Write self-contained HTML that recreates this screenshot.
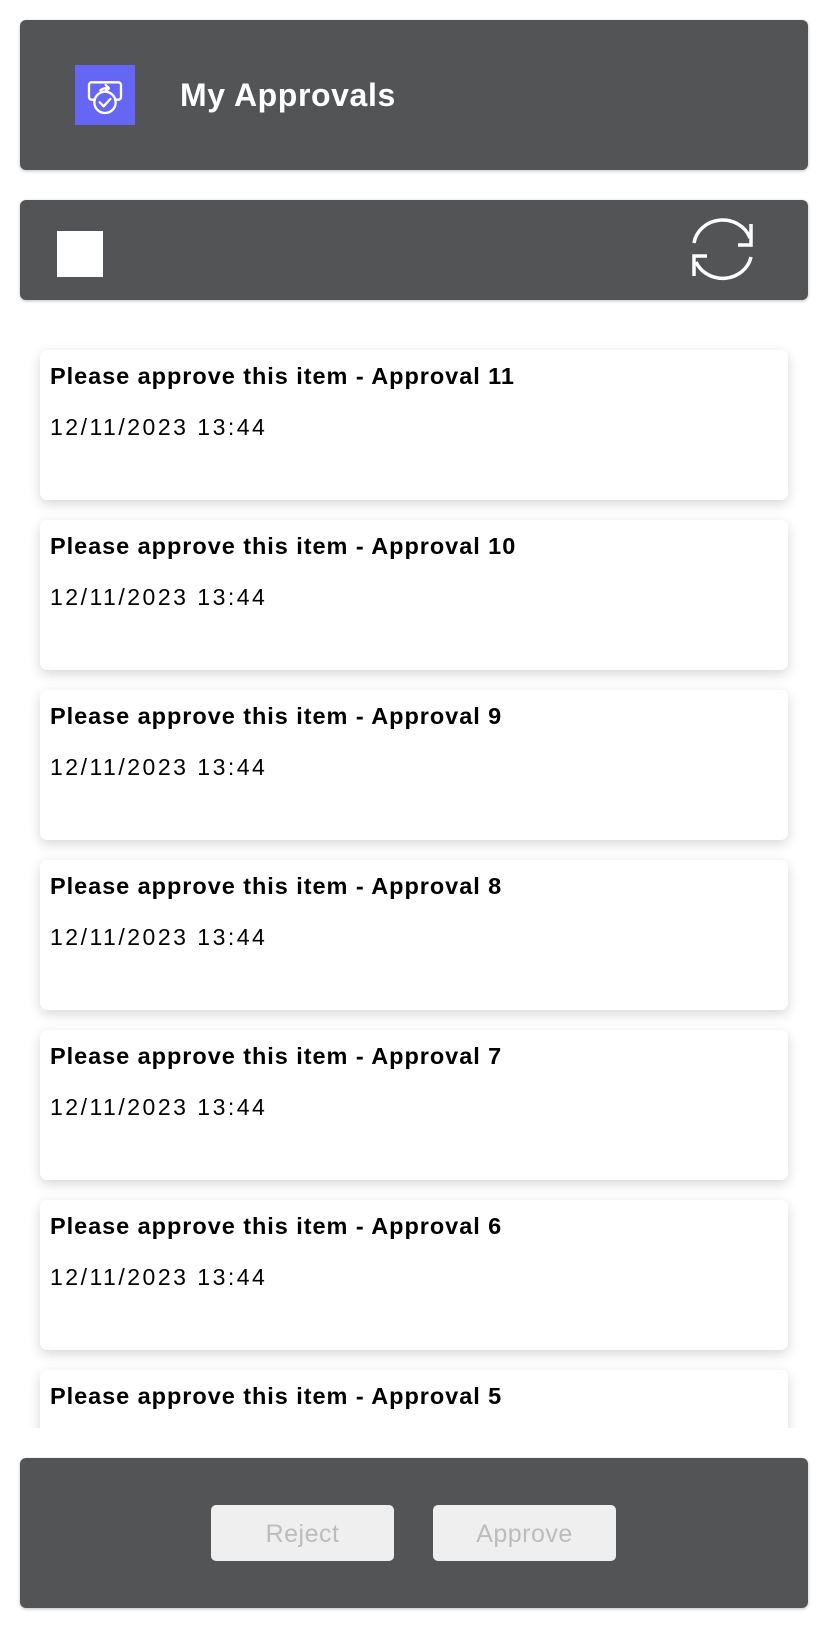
<!DOCTYPE html>
<html><head><meta charset="utf-8"><style>
*{margin:0;padding:0;box-sizing:border-box}
html,body{width:828px;height:1628px;background:#fff;font-family:"Liberation Sans",sans-serif;overflow:hidden}
.bar{position:absolute;left:20px;width:788px;background:#535456;border-radius:6px;box-shadow:0 1px 3px rgba(0,0,0,.25)}
.icon{position:absolute;left:75px;top:65px;width:60px;height:60px;background:#6567f4}
.title{position:absolute;left:180px;top:77px;color:#fff;font-weight:bold;font-size:32px;letter-spacing:0.6px}
.cb{position:absolute;left:57px;top:231px;width:46px;height:46px;background:#fff}
.list{position:absolute;left:0;top:320px;width:828px;height:1108px;overflow:hidden}
.card{position:absolute;left:40px;width:748px;height:150px;background:#fff;border-radius:7px;box-shadow:0 4px 12px rgba(0,0,0,.16)}
.card b{position:absolute;left:10px;top:13px;font-size:23.5px;color:#000;letter-spacing:0.95px}
.card span{position:absolute;left:10px;top:64px;font-size:23px;color:#000;letter-spacing:2.5px}
.btn{position:absolute;top:1505px;width:183px;height:56px;background:#efefef;border-radius:5px;color:#bcbcbc;font-size:25px;text-align:center;line-height:58px;letter-spacing:0.5px}
</style></head><body>
<div class="bar" style="top:20px;height:150px"></div>
<div class="icon"><svg width="60" height="60" viewBox="0 0 90 90"><g fill="none" stroke="#fff" stroke-width="3.5" stroke-linecap="round" stroke-linejoin="round"><path d="M30 52 H25 a4 4 0 0 1 -4 -4 V30 a4 4 0 0 1 4 -4 H65 a4 4 0 0 1 4 4 V48 a4 4 0 0 1 -4 4 H60"/><circle cx="45" cy="56" r="16"/><path d="M37 56 l6 6 l10 -11"/><path d="M38 38 a16 16 0 0 1 12 -3 M46 30 l5 5 l-5 4"/></g></svg></div>
<div class="title">My Approvals</div>
<div class="bar" style="top:200px;height:100px"></div>
<div class="cb"></div>
<svg style="position:absolute;left:690px;top:218px" width="66" height="64" viewBox="0 0 66 64"><g fill="none" stroke="#fff" stroke-width="3.5"><path d="M4 25 A29 27 0 0 1 60 20"/><path d="M61 6 V27 H48"/><path d="M61 39 A29 27 0 0 1 6 44"/><path d="M4 58 V38 H17"/></g></svg>
<div class="list">
<div class="card" style="top:30px"><b>Please approve this item - Approval 11</b><span>12/11/2023 13:44</span></div>
<div class="card" style="top:200px"><b>Please approve this item - Approval 10</b><span>12/11/2023 13:44</span></div>
<div class="card" style="top:370px"><b>Please approve this item - Approval 9</b><span>12/11/2023 13:44</span></div>
<div class="card" style="top:540px"><b>Please approve this item - Approval 8</b><span>12/11/2023 13:44</span></div>
<div class="card" style="top:710px"><b>Please approve this item - Approval 7</b><span>12/11/2023 13:44</span></div>
<div class="card" style="top:880px"><b>Please approve this item - Approval 6</b><span>12/11/2023 13:44</span></div>
<div class="card" style="top:1050px"><b>Please approve this item - Approval 5</b><span>12/11/2023 13:44</span></div>
</div>
<div class="bar" style="top:1458px;height:150px"></div>
<div class="btn" style="left:211px">Reject</div>
<div class="btn" style="left:433px">Approve</div>
</body></html>
